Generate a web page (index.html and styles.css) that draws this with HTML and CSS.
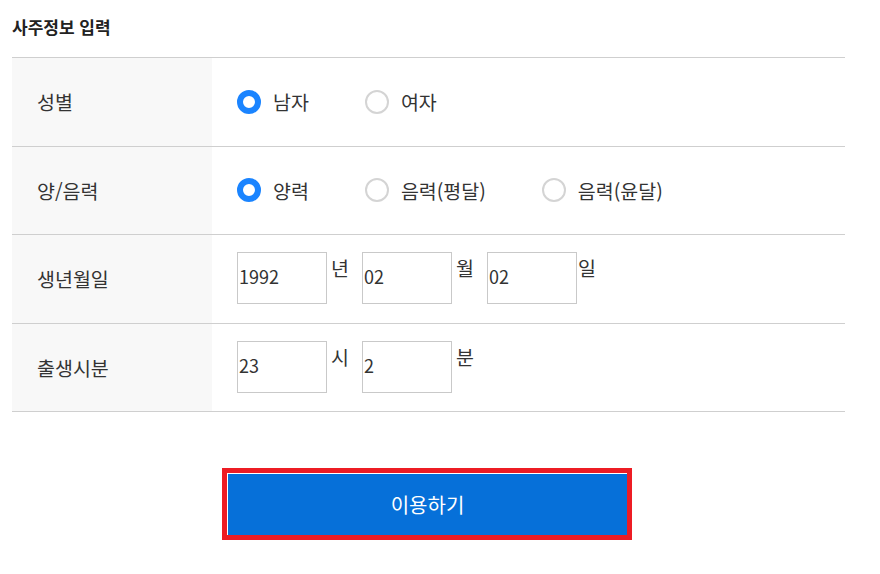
FILE: index.html
```html
<!DOCTYPE html>
<html lang="ko">
<head>
<meta charset="utf-8">
<link rel="stylesheet" href="styles.css">
</head>
<body>
<div class="page">
  <h2 class="title">사주정보 입력</h2>
  <div class="table">
    <div class="row">
      <div class="label">성별</div>
      <div class="field">
        <label class="radio"><span class="dot checked"></span>남자</label>
        <label class="radio"><span class="dot"></span>여자</label>
      </div>
    </div>
    <div class="row">
      <div class="label">양/음력</div>
      <div class="field">
        <label class="radio"><span class="dot checked"></span>양력</label>
        <label class="radio"><span class="dot"></span>음력(평달)</label>
        <label class="radio"><span class="dot"></span>음력(윤달)</label>
      </div>
    </div>
    <div class="row">
      <div class="label">생년월일</div>
      <div class="field inputs">
        <input class="box" type="text" value="1992"><span class="unit">년</span>
        <input class="box" type="text" value="02"><span class="unit">월</span>
        <input class="box" type="text" value="02"><span class="unit tight">일</span>
      </div>
    </div>
    <div class="row">
      <div class="label">출생시분</div>
      <div class="field inputs">
        <input class="box" type="text" value="23"><span class="unit">시</span>
        <input class="box" type="text" value="2"><span class="unit">분</span>
      </div>
    </div>
  </div>
  <div class="actions">
    <div class="btn-frame"><button class="btn" type="button">이용하기</button></div>
  </div>
</div>
</body>
</html>
```

FILE: styles.css
```css
* { box-sizing: border-box; }
html, body { margin: 0; padding: 0; background: #fff; }
body {
  font-family: "Noto Sans CJK KR", "Noto Sans", sans-serif;
  color: #333;
}
.page {
  width: 845px;
  padding: 15px 0 0 12px;
}
.title {
  margin: 0;
  font-size: 17px;
  font-weight: 700;
  line-height: 24px;
  color: #222;
  height: 42px;
}
.table {
  border-top: 1px solid #cfcfcf;
}
.row {
  display: flex;
  height: 88.5px;
  border-bottom: 1px solid #cfcfcf;
}
.label {
  width: 200px;
  background: #f8f8f8;
  padding-left: 25px;
  display: flex;
  align-items: center;
  font-size: 19.5px;
  color: #333;
}
.field {
  flex: 1;
  display: flex;
  align-items: center;
  padding-left: 25px;
}
.radio {
  display: flex;
  align-items: center;
  font-size: 19.5px;
  color: #333;
  margin-right: 56px;
}
.dot {
  width: 24px;
  height: 24px;
  border-radius: 50%;
  border: 2px solid #d4d4d4;
  margin-right: 12px;
  background: #fff;
}
.dot.checked {
  border: 6px solid #1a84ff;
}
.inputs {
  align-items: flex-start;
  padding-top: 17px;
}
.box {
  width: 90px;
  height: 52px;
  border: 1px solid #c9c9c9;
  padding: 0 0 4px 1px;
  margin: 0;
  font-family: "Noto Sans CJK KR", "Noto Sans", sans-serif;
  font-size: 18px;
  color: #333;
  background: #fff;
  outline: none;
}
.unit {
  font-size: 19.5px;
  line-height: 26px;
  margin: 3px 13px 0 4px;
  color: #333;
}
.unit.tight { margin-left: 1px; }
.actions {
  display: flex;
  padding: 56px 0 0 210px;
}
.btn-frame {
  border: 5px solid #ed1c24;
}
.btn {
  display: block;
  width: 400px;
  height: 62px;
  border: 0;
  border-left: 1px solid #fff;
  border-top: 1px solid #fff;
  background: #0670d9;
  color: #fff;
  font-family: "Noto Sans CJK KR", "Noto Sans", sans-serif;
  font-size: 20px;
  padding: 0;
  cursor: pointer;
}
```
